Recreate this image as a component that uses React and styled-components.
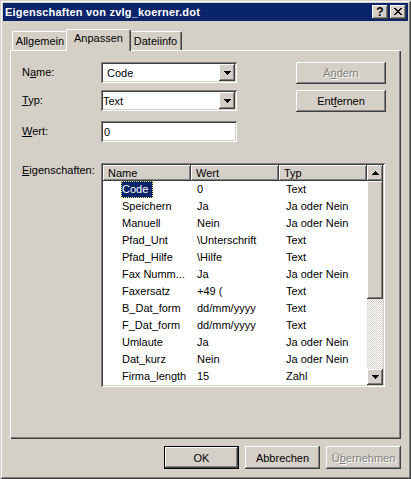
import styled, { createGlobalStyle, css } from 'styled-components';

const FACE = '#d4d0c8';
const NAVY = '#0a246a';

const raised = css`
  box-shadow: inset -1px -1px #404040, inset 1px 1px #fff, inset -2px -2px #808080, inset 2px 2px ${FACE};
`;
const sunken = css`
  box-shadow: inset 1px 1px #808080, inset -1px -1px #fff, inset 2px 2px #404040, inset -2px -2px ${FACE};
`;

const Global = createGlobalStyle`
  body {
    margin: 0;
    font-family: "Liberation Sans", Arial, sans-serif;
    font-size: 11px;
    color: #000;
    -webkit-font-smoothing: none;
  }
  * { box-sizing: border-box; }
`;

const Window = styled.div`
  width: 411px;
  height: 479px;
  padding: 3px;
  background: ${FACE};
  box-shadow: inset 1px 1px ${FACE}, inset -1px -1px #404040, inset 2px 2px #fff, inset -2px -2px #808080;
  display: flex;
  flex-direction: column;
`;

const TitleBar = styled.div`
  height: 18px;
  background: ${NAVY};
  display: flex;
  align-items: center;
  padding-left: 2px;
  color: #fff;
  font-weight: bold;
  font-size: 11px;
  letter-spacing: 0.2px;
`;

const TitleButtons = styled.div`
  margin-left: auto;
  margin-right: 2px;
  display: flex;
  gap: 2px;
`;

const CaptionButton = styled.div`
  width: 16px;
  height: 14px;
  background: ${FACE};
  ${raised};
  display: flex;
  align-items: center;
  justify-content: center;
  color: #000;
  font-weight: bold;
  font-size: 12px;
  letter-spacing: 0;
  padding-bottom: 1px;
`;

const Body = styled.div`
  display: flex;
  flex-direction: column;
  padding: 8px 7px 0;
`;

const TabStrip = styled.div`
  display: flex;
  align-items: flex-end;
  height: 21px;
  padding-left: 2px;
`;

const Tab = styled.div`
  width: ${(p) => p.$w}px;
  height: ${(p) => (p.$active ? 22 : 19)}px;
  margin: ${(p) => (p.$active ? '0 -2px -1px' : '0')};
  position: relative;
  z-index: ${(p) => (p.$active ? 2 : 1)};
  background: ${FACE};
  border-top: 1px solid #fff;
  border-left: 1px solid #fff;
  border-right: 1px solid #404040;
  border-radius: 2px 2px 0 0;
  box-shadow: inset -1px 0 #808080;
  display: flex;
  justify-content: center;
  padding-top: ${(p) => (p.$active ? 2 : 3)}px;
  line-height: 13px;
`;

const Panel = styled.div`
  height: 389px;
  background: ${FACE};
  box-shadow: inset 1px 1px #fff, inset -1px -1px #404040, inset -2px -2px #808080;
  padding: 12px 0 0 12px;
  display: flex;
  flex-direction: column;
`;

const FormTop = styled.div`
  display: flex;
`;

const FieldGrid = styled.div`
  display: grid;
  grid-template-columns: 79px 136px;
  grid-template-rows: 28px 31px 21px;
  align-items: start;
`;

const Label = styled.div`
  width: ${(p) => p.$w || 'auto'};
  line-height: ${(p) => p.$lh || 21}px;
`;

const Key = styled.span`
  text-decoration: underline;
  text-underline-offset: 1px;
`;

const Field = styled.div`
  width: 136px;
  height: 21px;
  background: #fff;
  ${sunken};
  display: flex;
  align-items: center;
  padding: 2px 2px 2px ${(p) => p.$pad}px;
`;

const FieldText = styled.span`
  flex: 1;
`;

const DropButton = styled.div`
  width: 16px;
  height: 17px;
  background: ${FACE};
  ${raised};
  display: flex;
  align-items: center;
  justify-content: center;
`;

const SideButtons = styled.div`
  display: flex;
  flex-direction: column;
  gap: 6px;
  margin-left: 59px;
`;

const PushButton = styled.div`
  width: ${(p) => p.$w}px;
  height: ${(p) => p.$h}px;
  background: ${FACE};
  ${(p) =>
    p.$default
      ? css`box-shadow: inset 0 0 0 1px #000, inset -2px -2px #404040, inset 2px 2px #fff, inset -3px -3px #808080;`
      : raised};
  display: flex;
  align-items: center;
  justify-content: center;
  color: ${(p) => (p.$disabled ? '#808080' : '#000')};
  text-shadow: ${(p) => (p.$disabled ? '1px 1px 0 #fff' : 'none')};
`;

const PropsSection = styled.div`
  display: flex;
  margin-top: 21px;
`;

const ListView = styled.div`
  width: 284px;
  height: 224px;
  padding: 2px;
  background: #fff;
  ${sunken};
  display: flex;
`;

const ListMain = styled.div`
  width: 264px;
  display: flex;
  flex-direction: column;
`;

const HeaderRow = styled.div`
  display: flex;
  height: 16px;
`;

const HeaderCell = styled.div`
  width: 88px;
  height: 16px;
  background: ${FACE};
  ${raised};
  padding-left: 5px;
  line-height: 16px;
`;

const Row = styled.div`
  display: flex;
  height: 17px;
  align-items: center;
`;

const Cell = styled.div`
  width: 88px;
  padding-left: ${(p) => p.$pad}px;
  white-space: nowrap;
  overflow: hidden;
  line-height: 15px;
`;

const Selected = styled.span`
  display: inline-block;
  margin-left: -1px;
  padding-right: 4px;
  background: ${NAVY};
  color: #fff;
  border: 1px dotted #f0f070;
  line-height: 15px;
`;

const ScrollBar = styled.div`
  width: 16px;
  display: flex;
  flex-direction: column;
`;

const ScrollButton = styled.div`
  width: 16px;
  height: ${(p) => p.$h}px;
  background: ${FACE};
  ${raised};
  display: flex;
  align-items: center;
  justify-content: center;
`;

const Track = styled.div`
  flex: 1;
  background-color: ${FACE};
  background-image: conic-gradient(#fff 25%, ${FACE} 0 50%, #fff 0 75%, ${FACE} 0);
  background-size: 2px 2px;
`;

const ButtonRow = styled.div`
  display: flex;
  justify-content: flex-end;
  gap: 6px;
  margin-top: 7px;
`;

const Arrow = ({ up }) => (
  <svg width="7" height="4" viewBox="0 0 7 4" shapeRendering="crispEdges">
    {up ? (
      <>
        <rect x="3" y="0" width="1" height="1" />
        <rect x="2" y="1" width="3" height="1" />
        <rect x="1" y="2" width="5" height="1" />
        <rect x="0" y="3" width="7" height="1" />
      </>
    ) : (
      <>
        <rect x="0" y="0" width="7" height="1" />
        <rect x="1" y="1" width="5" height="1" />
        <rect x="2" y="2" width="3" height="1" />
        <rect x="3" y="3" width="1" height="1" />
      </>
    )}
  </svg>
);

const CloseGlyph = () => (
  <svg width="8" height="7" viewBox="0 0 8 7" shapeRendering="crispEdges">
    <path d="M0 0h2v1h-2zM6 0h2v1h-2zM1 1h2v1h-2zM5 1h2v1h-2zM2 2h4v1h-4zM3 3h2v1h-2zM2 4h4v1h-4zM1 5h2v1h-2zM5 5h2v1h-2zM0 6h2v1h-2zM6 6h2v1h-2z" />
  </svg>
);

const rows = [
  ['Code', '0', 'Text'],
  ['Speichern', 'Ja', 'Ja oder Nein'],
  ['Manuell', 'Nein', 'Ja oder Nein'],
  ['Pfad_Unt', '\\Unterschrift', 'Text'],
  ['Pfad_Hilfe', '\\Hilfe', 'Text'],
  ['Fax Numm...', 'Ja', 'Ja oder Nein'],
  ['Faxersatz', '+49 (', 'Text'],
  ['B_Dat_form', 'dd/mm/yyyy', 'Text'],
  ['F_Dat_form', 'dd/mm/yyyy', 'Text'],
  ['Umlaute', 'Ja', 'Ja oder Nein'],
  ['Dat_kurz', 'Nein', 'Ja oder Nein'],
  ['Firma_length', '15', 'Zahl'],
];

export default function App() {
  return (
    <>
      <Global />
      <Window>
        <TitleBar>
          Eigenschaften von zvlg_koerner.dot
          <TitleButtons>
            <CaptionButton>?</CaptionButton>
            <CaptionButton>
              <CloseGlyph />
            </CaptionButton>
          </TitleButtons>
        </TitleBar>
        <Body>
          <TabStrip>
            <Tab $w={56}>Allgemein</Tab>
            <Tab $w={65} $active>Anpassen</Tab>
            <Tab $w={53}>Dateiinfo</Tab>
          </TabStrip>
          <Panel>
            <FormTop>
              <FieldGrid>
                <Label>N<Key>a</Key>me:</Label>
                <Field $pad={6}>
                  <FieldText>Code</FieldText>
                  <DropButton><Arrow /></DropButton>
                </Field>
                <Label><Key>T</Key>yp:</Label>
                <Field $pad={2}>
                  <FieldText>Text</FieldText>
                  <DropButton><Arrow /></DropButton>
                </Field>
                <Label><Key>W</Key>ert:</Label>
                <Field $pad={3}>
                  <FieldText>0</FieldText>
                </Field>
              </FieldGrid>
              <SideButtons>
                <PushButton $w={90} $h={22} $disabled>Ä<Key>n</Key>dern</PushButton>
                <PushButton $w={90} $h={22}>Ent<Key>f</Key>ernen</PushButton>
              </SideButtons>
            </FormTop>
            <PropsSection>
              <Label $w="79px" $lh={14}>
                <Key>E</Key>igenschaften:
              </Label>
              <ListView>
                <ListMain>
                  <HeaderRow>
                    <HeaderCell>Name</HeaderCell>
                    <HeaderCell>Wert</HeaderCell>
                    <HeaderCell>Typ</HeaderCell>
                  </HeaderRow>
                  {rows.map(([n, w, t], i) => (
                    <Row key={n}>
                      <Cell $pad={19}>{i === 0 ? <Selected>{n}</Selected> : n}</Cell>
                      <Cell $pad={6}>{w}</Cell>
                      <Cell $pad={7}>{t}</Cell>
                    </Row>
                  ))}
                </ListMain>
                <ScrollBar>
                  <ScrollButton $h={16}><Arrow up /></ScrollButton>
                  <ScrollButton $h={118} />
                  <Track />
                  <ScrollButton $h={16}><Arrow /></ScrollButton>
                </ScrollBar>
              </ListView>
            </PropsSection>
          </Panel>
          <ButtonRow>
            <PushButton $w={75} $h={23} $default>OK</PushButton>
            <PushButton $w={75} $h={23}>Abbrechen</PushButton>
            <PushButton $w={75} $h={23} $disabled>Ü<Key>b</Key>ernehmen</PushButton>
          </ButtonRow>
        </Body>
      </Window>
    </>
  );
}
